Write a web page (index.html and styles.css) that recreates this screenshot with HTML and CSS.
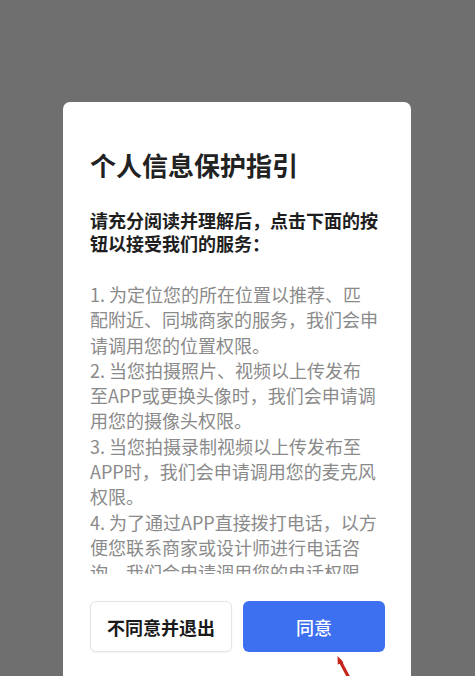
FILE: index.html
```html
<!DOCTYPE html>
<html lang="zh-CN">
<head>
<meta charset="utf-8">
<title>个人信息保护指引</title>
<link rel="stylesheet" href="styles.css">
</head>
<body>
<div class="screen">
  <div class="dialog">
    <h1 class="title">个人信息保护指引</h1>
    <p class="lead">请充分阅读并理解后，点击下面的按钮以接受我们的服务：</p>
    <div class="scroll">
      <p class="item">1. 为定位您的所在位置以推荐、匹配附近、同城商家的服务，我们会申请调用您的位置权限。</p>
      <p class="item">2. 当您拍摄照片、视频以上传发布至APP或更换头像时，我们会申请调用您的摄像头权限。</p>
      <p class="item">3. 当您拍摄录制视频以上传发布至APP时，我们会申请调用您的麦克风权限。</p>
      <p class="item">4. 为了通过APP直接拨打电话，以方便您联系商家或设计师进行电话咨询，我们会申请调用您的电话权限。</p>
    </div>
    <div class="actions">
      <button class="btn btn-ghost">不同意并退出</button>
      <button class="btn btn-primary">同意</button>
    </div>
  </div>
  <svg class="arrow" width="30" height="24" viewBox="0 0 30 24">
    <path d="M24 26 L15 9" stroke="#c4241c" stroke-width="3.2" stroke-linecap="round" fill="none"/>
    <path d="M12.5 4 L18.5 10.5 L12.8 12.6 Z" fill="#c4241c"/>
  </svg>
</div>
</body>
</html>
```

FILE: styles.css
```css
html, body {
  margin: 0;
  padding: 0;
}
body {
  background: #6f6f6f;
  font-family: "Noto Sans CJK SC", "Noto Sans", sans-serif;
}
.screen {
  position: relative;
  width: 475px;
  height: 676px;
  overflow: hidden;
  padding-top: 102px;
  box-sizing: border-box;
}
.dialog {
  margin-left: 63px;
  width: 348px;
  height: 620px;
  box-sizing: border-box;
  background: #ffffff;
  border-radius: 7px;
  padding: 45px 26px 0 27px;
}
.title {
  margin: 0;
  font-size: 26px;
  line-height: 36px;
  font-weight: 700;
  color: #222222;
  letter-spacing: 0;
}
.lead {
  margin: 26px 0 0 0;
  width: 288.5px;
  font-size: 18px;
  line-height: 23px;
  font-weight: 700;
  color: #1e1e1e;
}
.scroll {
  margin-top: 27px;
  width: 288.5px;
  height: 292px;
  overflow: hidden;
}
.item {
  margin: 0;
  font-size: 18px;
  line-height: 25.3px;
  color: #8a8a8a;
}
.actions {
  margin-top: 27px;
  display: flex;
  gap: 11px;
}
.btn {
  flex: 0 0 142px;
  height: 51px;
  border-radius: 6px;
  font-family: "Noto Sans CJK SC", "Noto Sans", sans-serif;
  font-size: 18px;
  font-weight: 700;
  padding: 0;
  cursor: pointer;
}
.btn-ghost {
  background: #ffffff;
  color: #1a1a1a;
  border: 1px solid #e4e4e4;
  box-shadow: 0 1px 2px rgba(0, 0, 0, 0.06);
}
.btn-primary {
  background: #3d6ff1;
  color: #ffffff;
  border: none;
  font-weight: 500;
}
.arrow {
  position: absolute;
  left: 325px;
  top: 652px;
}
```
